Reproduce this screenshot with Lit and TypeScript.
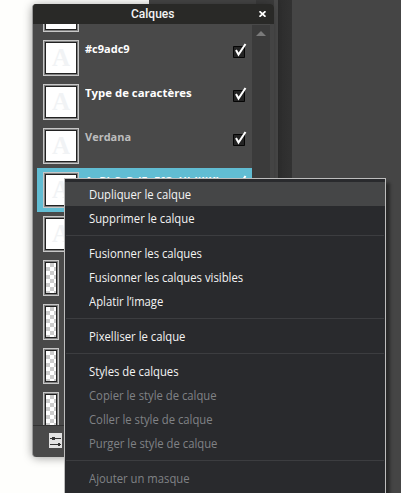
import { LitElement, html, css } from "lit";
import { customElement } from "lit/decorators.js";

interface Layer { name: string; kind: "blank" | "text" | "pixels"; dim?: boolean; active?: boolean; stretch?: number }

const layers: Layer[] = [
  { name: "", kind: "blank" },
  { name: "#c9adc9", kind: "text" },
  { name: "Type de caractères", kind: "text", stretch: 1.035 },
  { name: "Verdana", kind: "text", dim: true },
  { name: "AaBbCcDdEeFfGgHhIiJjKk", kind: "text", active: true },
  { name: "", kind: "text" },
  { name: "", kind: "pixels" },
  { name: "", kind: "pixels" },
  { name: "", kind: "pixels" },
  { name: "", kind: "pixels" },
];

const groups: { label: string; off?: boolean; first?: boolean }[][] = [
  [{ label: "Dupliquer le calque", first: true }, { label: "Supprimer le calque" }],
  [{ label: "Fusionner les calques" }, { label: "Fusionner les calques visibles" }, { label: "Aplatir l’image" }],
  [{ label: "Pixelliser le calque" }],
  [{ label: "Styles de calques" }, { label: "Copier le style de calque", off: true }, { label: "Coller le style de calque", off: true }, { label: "Purger le style de calque", off: true }],
  [{ label: "Ajouter un masque", off: true }],
];

@customElement("app-root")
export class AppRoot extends LitElement {
  static styles = css`
    :host { display: block; position: relative; width: 401px; height: 493px; overflow: hidden; background: #fefefc; font-family: "Open Sans", "Noto Sans", sans-serif; }
    * { box-sizing: border-box; }
    .app { position: absolute; left: 149px; top: 0; right: 0; height: 493px; background: #454545; display: flex; }
    .app::before { content: ""; width: 107px; }
    .track { width: 18px; background: #3b3b3b; }
    .edge { width: 4px; background: #494949; }
    .gutter { width: 14px; background: linear-gradient(90deg, #2c2c2c, #323232); }
    .panel { position: absolute; left: 32px; top: 4px; width: 242px; height: 453px; display: flex; flex-direction: column; border-radius: 4px; overflow: hidden; background: #494949; border-left: 1px solid #999; }
    .shadow { position: absolute; left: 32px; top: 4px; width: 240px; height: 453px; border-radius: 5px; box-shadow: 0 1px 10px rgba(0,0,0,.38); }
    header { height: 20px; flex: none; background: #292927; display: flex; align-items: center; color: #f4f4f4; font: 500 12px/18px Roboto, sans-serif; }
    .title { flex: 1; padding-left: 98px; }
    .close { width: 7px; height: 6px; margin: 0 8px 0 0; }
    .body { height: 401px; flex: none; display: flex; overflow: hidden; }
    .list { width: 219px; padding-left: 4px; margin-top: -32px; }
    .row { height: 44px; display: flex; padding: 4px 5px 4px 6px; color: #fff; }
    .active { background: #61bdd3; }
    .thumb { width: 36px; height: 36px; flex: none; border: 1px solid #c8c8c8; background: #808080; padding: 1px; }
    .inner { height: 32px; border: 1px solid #222; background: #fff; display: flex; align-items: center; justify-content: center; color: #f1f3f5; font: bold 25px/28px "Liberation Serif", serif; }
    .narrow { width: 16px; }
    .narrow .inner { background: repeating-conic-gradient(#ccc 0 25%, #fff 0 50%) 0 0 / 8px 8px; }
    .name { flex: 1; white-space: nowrap; font-size: 11px; font-weight: 700; line-height: 14px; padding: 2px 0 0 6px; min-width: 0; }
    .name span { display: inline-block; transform-origin: 0 50%; }
    .dim { color: #bdbdbd; }
    .check { width: 16px; height: 18px; margin-top: 2px; flex: none; }
    .scroll { width: 18px; background: #3b3b3b; margin-top: 1px; }
    .scroll svg { display: block; margin: 6px 0 0 4px; }
    .rail { width: 4px; background: #444; }
    footer { height: 32px; flex: none; border-top: 1px solid #333; padding: 7px 0 0 16px; }
    footer svg { display: block; }
    .menu { position: absolute; left: 64px; top: 178px; width: 322px; height: 330px; background: #292a2d; border: 1px solid #bdbdbd; padding-top: 3px; box-shadow: 4px 5px 3px rgba(0,0,0,.42); }
    .item { height: 24px; padding-left: 24px; font-size: 12px; line-height: 26px; color: #f4f4f4; }
    .item span { display: inline-block; transform: scaleX(.94); transform-origin: 0 50%; }
    .item.first { background: #454647; }
    .item.off { color: #808286; }
    .sep { height: 1px; background: #3c3d40; margin: 5px 1px; }
  `;

  render() {
    return html`<div class="app"><div class="track"></div><div class="edge"></div><div class="gutter"></div></div>
      <div class="shadow"></div>
      <section class="panel">
        <header><span class="title">Calques</span><svg class="close" viewBox="0 0 7 6"><path d="M.5 .3L6.5 5.7M6.5 .3L.5 5.7" stroke="#fff" stroke-width="1.8"/></svg></header>
        <div class="body">
          <div class="list">${layers.map(l => html`<div class="row ${l.active ? "active" : ""}">
            <div class="thumb ${l.kind === "pixels" ? "narrow" : ""}"><div class="inner">${l.kind === "text" ? "A" : ""}</div></div>
            <div class="name ${l.dim ? "dim" : ""}"><span style="transform: scaleX(${l.stretch ?? 1})">${l.name}</span></div>
            <svg class="check" viewBox="0 0 16 18"><path d="M2.5 4.5h11v11h-11z" fill="#242424" stroke="#050505"/><path d="M5 8L7.5 12.5L14.5 2" fill="none" stroke="#fff" stroke-width="2"/></svg>
          </div>`)}</div>
          <div class="scroll"><svg width="10" height="5"><path d="M0 5L5 0L10 5z" fill="#7a7a7a"/></svg></div>
          <div class="rail"></div>
        </div>
        <footer><svg width="13" height="15"><path d="M0 0h13v15H0z" fill="#e2e2e2"/><path d="M1 5.5h11M1 11.5h11" stroke="#333"/><path d="M3 4h3v3H3zM9 10h2v3H9z" fill="#333"/></svg></footer>
      </section>
      <nav class="menu">${groups.map((g, i) => html`${i ? html`<div class="sep"></div>` : ""}${g.map(m => html`<div class="item ${m.off ? "off" : ""} ${m.first ? "first" : ""}"><span>${m.label}</span></div>`)}`)}</nav>`;
  }
}
